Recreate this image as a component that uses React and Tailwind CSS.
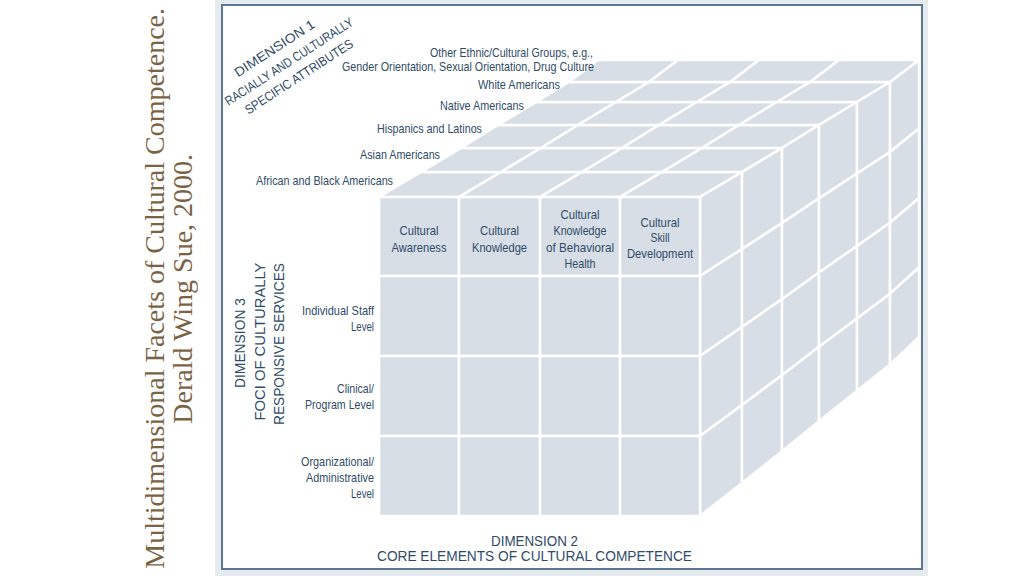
import React from "react";

const X = [379, 459, 540, 620, 700];
const Y = [197, 276, 356, 436, 516];
// depth layers (one per group), measured off the picture
const DX = [0, 42, 82, 119, 157, 190, 219];
const DY = [0, -25, -49, -72, -95, -115, -137];

const scale = (k) => 1 - (0.132 * DX[k]) / 219;
const side = (k, y) => [700 + DX[k], 197 + DY[k] + (y - 197) * scale(k)];
const pts = (list) => list.map((p) => p.join(",")).join(" ");

const FONT = "'Liberation Sans Narrow', 'Liberation Sans', Arial, sans-serif";
const INK = "#2f4b69";
const FILL = "#d7dee6";

const groups = [
  { t: "Other Ethnic/Cultural Groups, e.g.,", x: 593, y: 57, w: 163 },
  { t: "Gender Orientation, Sexual Orientation, Drug Culture", x: 594, y: 71, w: 252 },
  { t: "White Americans", x: 560, y: 88.5, w: 82 },
  { t: "Native Americans", x: 524, y: 110, w: 84 },
  { t: "Hispanics and Latinos", x: 482, y: 133, w: 105 },
  { t: "Asian Americans", x: 440, y: 159, w: 80 },
  { t: "African and Black Americans", x: 393, y: 185, w: 137 },
];

const elements = [
  { cx: 419, lines: [["Cultural", 235, 39], ["Awareness", 252, 55]] },
  { cx: 499.5, lines: [["Cultural", 235, 39], ["Knowledge", 252, 55]] },
  {
    cx: 580,
    lines: [
      ["Cultural", 219, 39],
      ["Knowledge", 235, 53],
      ["of Behavioral", 251.5, 68],
      ["Health", 268, 31],
    ],
  },
  { cx: 660, lines: [["Cultural", 227, 39], ["Skill", 242, 19], ["Development", 258, 66]] },
];

const levels = [
  ["Individual Staff", 315, 72],
  ["Level", 331, 23],
  ["Clinical/", 393, 37],
  ["Program Level", 409, 69],
  ["Organizational/", 466, 73],
  ["Administrative", 482, 68],
  ["Level", 497.5, 23],
];

function Label({ x, y, w, anchor = "middle", size = 13.5, children }) {
  return (
    <text
      x={x}
      y={y}
      textAnchor={anchor}
      textLength={w}
      lengthAdjust="spacingAndGlyphs"
      fontFamily={FONT}
      fontSize={size}
      fill={INK}
    >
      {children}
    </text>
  );
}

function Cube() {
  const top = [];
  const right = [];
  for (let k = 0; k < 6; k++) {
    for (let c = 0; c < 4; c++) {
      top.push([
        [X[c] + DX[k], 197 + DY[k]],
        [X[c + 1] + DX[k], 197 + DY[k]],
        [X[c + 1] + DX[k + 1], 197 + DY[k + 1]],
        [X[c] + DX[k + 1], 197 + DY[k + 1]],
      ]);
    }
    for (let r = 0; r < 4; r++) {
      right.push([side(k, Y[r]), side(k + 1, Y[r]), side(k + 1, Y[r + 1]), side(k, Y[r + 1])]);
    }
  }

  return (
    <g stroke="#ffffff" strokeWidth="2.5" strokeLinejoin="round" fill={FILL}>
      {top.map((p, i) => (
        <polygon key={`t${i}`} points={pts(p)} />
      ))}
      {right.map((p, i) => (
        <polygon key={`r${i}`} points={pts(p)} />
      ))}
      {Y.slice(0, 4).map((y, r) =>
        X.slice(0, 4).map((x, c) => (
          <rect key={`f${r}${c}`} x={x} y={y} width={X[c + 1] - x} height={Y[r + 1] - y} />
        ))
      )}
    </g>
  );
}

function Figure() {
  return (
    <svg viewBox="223 6 698 562" className="block w-full h-full">
      <Cube />

      {/* dimension 1 */}
      <g transform="translate(289 61.5) rotate(-33)">
        <Label x={-5} y={-14.5} w={93} size={13}>DIMENSION 1</Label>
        <Label x={0} y={4.5} w={150} size={13}>RACIALLY AND CULTURALLY</Label>
        <Label x={0} y={22.5} w={126} size={13}>SPECIFIC ATTRIBUTES</Label>
      </g>

      {groups.map((g) => (
        <Label key={g.t} x={g.x} y={g.y} w={g.w} anchor="end" size={13}>
          {g.t}
        </Label>
      ))}

      {elements.map((e) =>
        e.lines.map(([t, y, w]) => (
          <Label key={`${e.cx}${t}`} x={e.cx} y={y} w={w}>
            {t}
          </Label>
        ))
      )}

      {levels.map(([t, y, w]) => (
        <Label key={`${t}${y}`} x={374} y={y} w={w} anchor="end">
          {t}
        </Label>
      ))}

      {/* dimension 3 */}
      <g transform="translate(245 343) rotate(-90)">
        <Label x={0} y={0} w={90} size={14}>DIMENSION 3</Label>
      </g>
      <g transform="translate(265 341.5) rotate(-90)">
        <Label x={0} y={0} w={158} size={14}>FOCI OF CULTURALLY</Label>
      </g>
      <g transform="translate(283.5 344) rotate(-90)">
        <Label x={0} y={0} w={162} size={14}>RESPONSIVE SERVICES</Label>
      </g>

      {/* dimension 2 */}
      <Label x={534.5} y={546} w={87} size={14}>DIMENSION 2</Label>
      <Label x={534.5} y={560.5} w={315} size={14}>CORE ELEMENTS OF CULTURAL COMPETENCE</Label>
    </svg>
  );
}

export default function App() {
  return (
    <div className="w-[1024px] h-[576px] bg-white flex overflow-hidden">
      <div className="w-[215px] h-full flex items-center pl-[141px]">
        <div className="[writing-mode:vertical-rl] rotate-180 text-center text-[28px] leading-[28px] text-[#7a6345] font-['Liberation_Serif',serif] whitespace-nowrap">
          <div>Multidimensional Facets of Cultural Competence.</div>
          <div>Derald Wing Sue, 2000.</div>
        </div>
      </div>
      <div className="w-[713px] h-full bg-[#e6ebef] pl-[6px] pr-[5px] pt-[4px] pb-[6px]">
        <div className="h-full border-2 border-[#5b7792] bg-white">
          <Figure />
        </div>
      </div>
    </div>
  );
}
